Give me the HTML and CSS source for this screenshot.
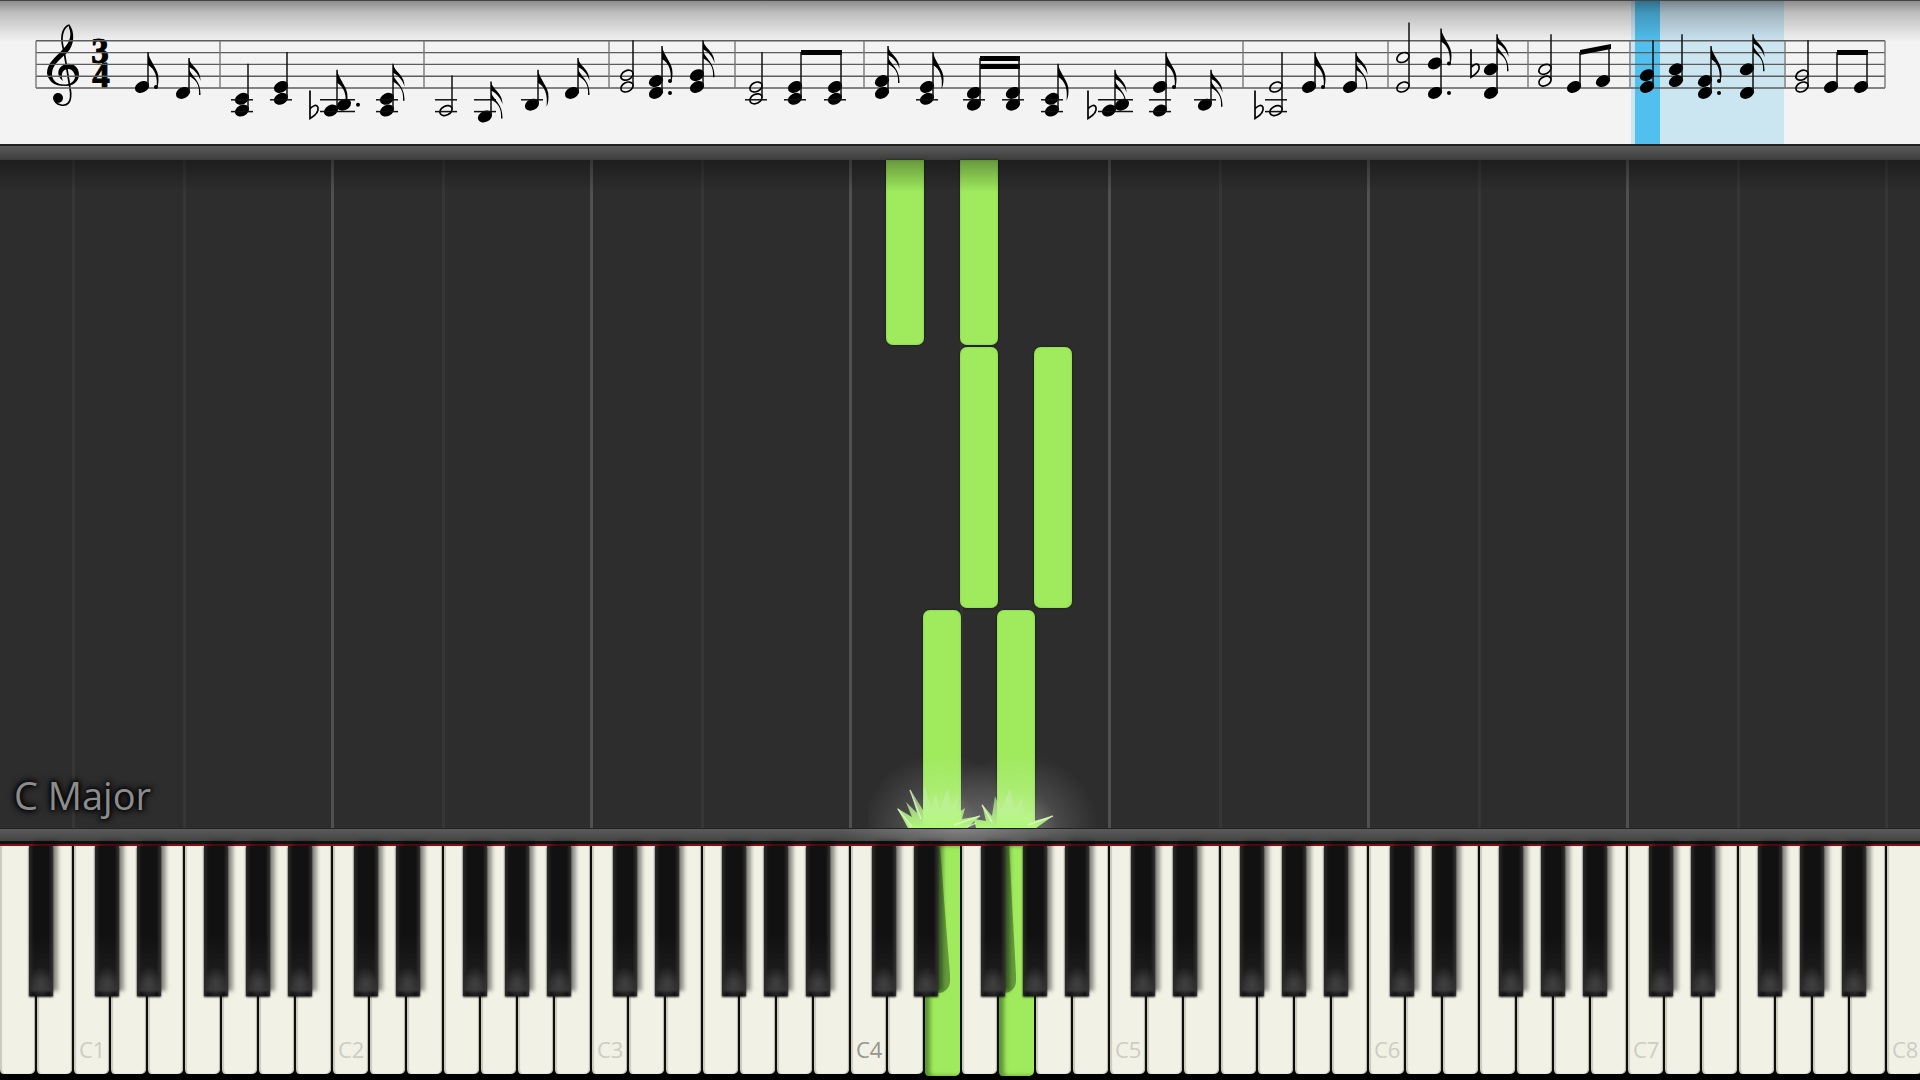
FILE: index.html
```html
<!DOCTYPE html>
<html lang="en">
  <head>
    <meta charset="UTF-8" />
    <meta name="viewport" content="width=device-width, initial-scale=1.0" />
    <title>Piano Player</title>
    <link rel="stylesheet" href="styles.css">
  </head>
  <body>
    <div class="player">
      <div class="score">
        <svg id="sheet" class="sheet" viewBox="0 0 1920 144" role="img" aria-label="Sheet music, 3/4 time">
          <defs>
            <linearGradient id="shade" x1="0" y1="0" x2="0" y2="1">
              <stop offset="0" stop-color="#000" stop-opacity="0.44" />
              <stop offset="0.3" stop-color="#000" stop-opacity="0.22" />
              <stop offset="1" stop-color="#000" stop-opacity="0" />
            </linearGradient>
            <g id="clef">
              <path d="M69 24 C75 31 75 45 67 53 C58 61 52 66 52 74 C52 81 58 85 66 85 C57 88 48 82 47 73 C47 63 56 57 63 49 C70 43 72 34 69 28 Z" />
              <path d="M58 84 C66 88 78 86 79 75 C79 66 72 63 67 64 C58 65 55 75 63 81 C60 74 63 69 68 69 C73 69 75 74 75 77 C74 83 68 86 58 84 Z" />
              <path class="thin" d="M69 25 C62 28 60 38 64 51 L70 88 C73 104 66 106 61 105 C56 104 54 101 55 98" />
              <circle cx="58" cy="98" r="5" />
            </g>
            <path id="flag8" d="M0 0 C1 9 11 17 10.500 27 C10.500 31 10 34 8.500 37 C10 25 7 17 0 13 Z" />
            <path id="flag16" d="M0 0 C1 8 12 11 11.500 23 C10 17 6 12 0 9 Z M0 10 C1 18 12 21 11.500 37 L10 37 C11 26 6 21 0 18 Z" />
            <path id="flat" class="thin" d="M0 -21 V7 C5 4 9 0 8 -4 C7 -8 3 -6 0 -3" />
            <ellipse id="head" rx="7.500" ry="5.500" transform="rotate(-28)" />
            <ellipse id="open" class="thin" rx="6.500" ry="4.500" transform="rotate(-28)" />
          </defs>
          <rect class="bar-now" x="1631" y="0" width="153" height="144" />
          <rect class="beat-now" x="1635" y="0" width="25" height="144" />
          <rect x="0" y="0" width="1920" height="42" fill="url(#shade)" />
          <rect x="0" y="0" width="1920" height="1" fill="#444" />
          <use href="#clef" />
          <text class="time" x="100" y="63">3</text>
          <text class="time" x="101" y="87">4</text>
        </svg>
      </div>

      <div class="rail"></div>

      <div class="roll">
        <div id="lanes" class="lanes"></div>
        <div class="key-name">C Major</div>
        <svg class="splash" viewBox="0 0 240 100" aria-hidden="true">
          <defs>
            <radialGradient id="glow">
              <stop offset="0" stop-color="#f0ffe0" stop-opacity="0.45" />
              <stop offset="0.5" stop-color="#fff" stop-opacity="0.13" />
              <stop offset="1" stop-color="#fff" stop-opacity="0" />
            </radialGradient>
            <linearGradient id="spark" x1="0" y1="0" x2="0" y2="1">
              <stop offset="0" stop-color="#c8eeb0" stop-opacity="0.5" />
              <stop offset="1" stop-color="#b0f878" />
            </linearGradient>
          </defs>
          <ellipse cx="74" cy="100" rx="80" ry="75" fill="url(#glow)" />
          <ellipse cx="150" cy="100" rx="80" ry="75" fill="url(#glow)" />
          <path fill="url(#spark)" d="M40 100 L29 80 L44 89 L38 74 L49 85 L42 61 L55 82 L56 56 L63 80 L68 66 L72 82 L80 60 L82 80 L90 70 L88 86 L97 80 L94 91 L112 88 L99 100 Z" />
          <path fill="url(#spark)" d="M108 100 L106 91 L118 93 L114 76 L124 88 L127 68 L133 82 L142 60 L146 82 L154 70 L155 86 L166 84 L162 94 L185 88 L168 100 Z" />
          <path class="ray" d="M86 97 L112 88 M99 99 L108 95 M160 97 L185 88 M30 81 L44 99 M42 62 L53 91 M114 77 L124 94" />
        </svg>
      </div>

      <div class="rail rail-bottom"></div>
      <div id="keyboard" class="keyboard"></div>
    </div>
    <script src="script.js"></script>
  </body>
</html>
```
FILE: styles.css
```css
body {
  margin: 0;
  background-color: #000;
  font-family: "Open Sans", "Noto Sans", sans-serif;
}
.player {
  display: flex;
  flex-direction: column;
  height: 100vh;
  overflow: hidden;
}

/* sheet music */
.score {
  background-color: #f3f3f3;
}
.sheet {
  display: block;
  width: 100%;
}
.bar-now {
  fill: #cbe5f1;
}
.beat-now {
  fill: #52c0ef;
}
.staff,
.barline {
  stroke: #5c5c5c;
  stroke-width: 1.4;
}
.barline {
  stroke: #777;
}
.stem,
.ledger {
  stroke: #111;
  stroke-width: 1.5;
}
.thin {
  fill: none;
  stroke: #000;
  stroke-width: 1.7;
}
.time {
  font-family: "Liberation Serif", serif;
  font-weight: bold;
  font-size: 35px;
  text-anchor: middle;
  stroke: #000;
  stroke-width: 1;
}

/* metal strips above and below the roll */
.rail {
  flex: none;
  height: 14px;
  border-top: 2px solid #222;
  background: linear-gradient(#5c5c5c, #3c3c3c);
}
.rail-bottom {
  height: 12px;
  border-top: 1px solid #222;
  border-bottom: 3px solid #111;
  background: radial-gradient(120px 40px at 50% 0, rgba(255, 255, 255, 0.25), transparent), linear-gradient(#5a5a5a, #444);
}

/* falling notes */
.roll {
  position: relative;
  flex: 1;
  min-height: 0;
  background-color: #2d2d2d;
}
.roll::after {
  content: "";
  position: absolute;
  inset: 0 0 auto;
  height: 32px;
  background: linear-gradient(rgba(0, 0, 0, 0.35), transparent);
}
.lanes,
.keyboard {
  display: grid;
  grid-template-columns: repeat(52, minmax(0, 1fr));
  margin-left: -2px;
  margin-right: -2px;
}
.lanes {
  grid-template-rows: 185fr 262fr 218fr;
  row-gap: 2px;
  height: 100%;
}
.lane {
  grid-row: 1 / -1;
}
.lane-f {
  border-left: 3px solid #363636;
}
.lane-c {
  border-left: 3px solid #505050;
}
.note {
  margin-right: -1px;
  border-radius: 7px;
  background-color: #9fea5d;
  box-shadow: inset 0 0 2px #7fc743, 0 0 2px #111;
}
.note-in {
  border-top-left-radius: 0;
  border-top-right-radius: 0;
}
.note-out {
  border-bottom-left-radius: 0;
  border-bottom-right-radius: 0;
}
.key-name {
  position: absolute;
  left: 14px;
  bottom: 7px;
  font-size: 38px;
  line-height: 52px;
  color: #8c8c8c;
  text-shadow: 0 0 4px #000, 0 0 6px #000, 0 0 8px #000;
}
.splash {
  position: absolute;
  left: 45.2%;
  bottom: 0;
  width: 12.5%;
}
.ray {
  fill: none;
  stroke: #e8ffd4;
  stroke-width: 1.5;
  stroke-opacity: 0.7;
}

/* keyboard */
.keyboard {
  flex: none;
  height: 228px;
  padding-bottom: 6px;
  border-top: 2px solid #7c1420;
  background-color: #000;
}
.key {
  position: relative;
  display: flex;
  align-items: flex-end;
  min-width: 0;
  padding: 0 0 10px 5px;
  border: 0;
  border-left: 2px solid #0c0c0a;
  border-radius: 0 0 5px 5px;
  background-color: #f1f1e5;
  box-shadow: inset 2px 0 1px #c9c9bd, inset -1px 0 1px #b5b5aa;
  font-family: inherit;
  font-size: 22px;
  line-height: 30px;
  color: #cdcdc3;
}
.key-middle {
  color: #96968e;
}
.key-down {
  margin-bottom: -2px;
  background-color: #9fea5d;
  box-shadow: inset 5px 0 4px #5c9435;
}
.sharp {
  position: absolute;
  z-index: 1;
  top: 0;
  width: 24px;
  height: 150px;
  background: linear-gradient(90deg, #2a2a28, transparent 20%, transparent 82%, #333), radial-gradient(12px 18px at 50% 92%, #404040, transparent), linear-gradient(#111 60%, #1c1c1c 85%, #303030 96%, #0a0a0a 98%);
  box-shadow: 5px -5px 4px rgba(0, 0, 0, 0.4), 0 1px 2px #111;
}
.sharp-c {
  left: 60%;
}
.sharp-d {
  left: 75%;
}
.sharp-f {
  left: 53%;
}
.sharp-g {
  left: 68%;
}
.sharp-a {
  left: 82%;
}
/* long shadow a sharp drops on a pressed key */
.key-down::before {
  content: "";
  position: absolute;
  top: 0;
  left: 0;
  width: 25px;
  height: 147px;
  border-radius: 0 0 12px 0;
  background-color: #659c3b;
  clip-path: polygon(0 0, 60% 0, 80% 45%, 100% 88%, 100% 100%, 0 100%);
}
/* G sits closer to the sharp on its left */
.key-down-g::before {
  width: 17px;
}
```
FILE: script.js
```js
const SVG = "http://www.w3.org/2000/svg";
const sheet = document.getElementById("sheet");
const lanes = document.getElementById("lanes");
const keyboard = document.getElementById("keyboard");

// x of the head, steps above E4, type ("q", "h", "8", "16" or "b" for beamed)
const notes = [
  [142, [0], "8", "dot"], [183, [-1], "16"],
  [242, [-2, -4], "q"], [281, [0, -2], "q"],
  [331, [-4, -3], "8", "dot"], [387, [-2, -4], "16"],
  [446, [-4], "h"], [485, [-5], "16"], [532, [-3], "8"], [572, [-1], "16"],
  [627, [2, 0], "h"], [656, [1, -1], "8", "dot"], [697, [2, 0], "16"],
  [756, [0, -2], "h"], [795, [0, -2], "b"], [835, [0, -2], "b"],
  [882, [1, -1], "16"], [927, [0, -2], "8"],
  [974, [-1, -3], "b"], [1013, [-1, -3], "b"], [1052, [-2, -4], "8"],
  [1109, [-4, -3], "16"], [1160, [0, -4], "8", "dot"], [1205, [-3], "16"],
  [1276, [0, -4], "h"], [1309, [0], "8", "dot"], [1350, [0], "16"],
  [1403, [5, 0], "h"], [1435, [4, -1], "8", "dot"], [1491, [3, -1], "16"],
  [1545, [3, 1], "h"], [1574, [0], "b"], [1603, [1], "b"],
  [1647, [2, 0], "q"], [1676, [3, 1], "q"],
  [1705, [1, -1], "8", "dot"], [1747, [3, -1], "16"],
  [1802, [2, 0], "h"], [1831, [0], "b"], [1861, [0], "b"],
];
const bars = [36, 220, 424, 609, 735, 864, 1243, 1388, 1528, 1630, 1785, 1885];
const flats = [[310, -4], [1088, -4], [1255, -4], [1471, 3]];
const beams = [
  [801, 50, 842, 50], [980, 56, 1020, 56], [980, 64, 1020, 64],
  [1580, 50, 1611, 44], [1837, 50, 1868, 50],
];

function draw(tag, attrs) {
  const el = document.createElementNS(SVG, tag);
  for (const name in attrs) {
    el.setAttribute(name, attrs[name]);
  }
  sheet.appendChild(el);
}

function line(cls, x1, y1, x2, y2) {
  draw("line", { class: cls, x1, y1, x2, y2 });
}

function stepY(step) {
  return 88 - step * 5.9;
}

for (let i = 0; i < 5; i++) {
  line("staff", 36, stepY(i * 2), 1885, stepY(i * 2));
}
bars.forEach((x) => line("barline", x, stepY(8), x, stepY(0)));
flats.forEach(([x, step]) => draw("use", { href: "#flat", x, y: stepY(step) }));
beams.forEach(([x1, y1, x2, y2]) =>
  draw("path", { d: `M${x1} ${y1} L${x2} ${y2} V${y2 + 5} L${x1} ${y1 + 5} Z` })
);

notes.forEach(([x, steps, type, dot]) => {
  const cluster = steps[1] - steps[0] === 1;
  const top = stepY(Math.max(...steps)) - 36;
  const low = Math.min(...steps);
  const stem = x + 6;

  steps.forEach((step, i) => {
    const headX = cluster && i === 1 ? x + 13 : x;
    draw("use", { href: type === "h" ? "#open" : "#head", x: headX, y: stepY(step) - 1 });
    if (dot && step > -4) {
      draw("circle", { cx: headX + 14, cy: stepY(step) - 1, r: 2 });
    }
  });
  for (let step = -2; step >= low; step -= 2) {
    line("ledger", x - 11, stepY(step), x + (cluster ? 24 : 11), stepY(step));
  }
  line("stem", stem, top, stem, stepY(low) - 2);
  if (type === "8" || type === "16") {
    draw("use", { href: "#flag" + type, x: stem, y: top });
  }
});

// 52 white keys, A0 to C8
const names = ["A", "B", "C", "D", "E", "F", "G"];
const pressed = [25, 27];

for (let i = 0; i < 52; i++) {
  const name = names[i % 7];
  const octave = Math.floor((i + 5) / 7);

  const lane = document.createElement("div");
  lane.className = "lane";
  if (name === "F" || i === 2 || i === 51) {
    lane.classList.add("lane-f");
  } else if (name === "C") {
    lane.classList.add("lane-c");
  }
  lane.style.gridColumn = i + 1;
  lanes.appendChild(lane);

  const key = document.createElement("button");
  key.type = "button";
  key.className = "key";
  key.setAttribute("aria-label", name + octave);
  if (name === "C") {
    key.textContent = name + octave;
  }
  if (i === 23) {
    key.classList.add("key-middle");
  }
  if (pressed.includes(i)) {
    key.classList.add("key-down", "key-down-" + name.toLowerCase());
  }
  if (name !== "B" && name !== "E" && i < 51) {
    const sharp = document.createElement("span");
    sharp.className = "sharp sharp-" + name.toLowerCase();
    key.appendChild(sharp);
  }
  // A0 has its sharp too, the lowest pair on the board
  keyboard.appendChild(key);
}

// white key index, row of the roll, extra class
[
  [24, 1, "note-in"], [26, 1, "note-in"],
  [26, 2], [28, 2],
  [25, 3, "note-out"], [27, 3, "note-out"],
].forEach(([key, row, extra]) => {
  const note = document.createElement("div");
  note.className = "note " + (extra || "");
  note.style.gridColumn = key + 1;
  note.style.gridRow = row;
  lanes.appendChild(note);
});
```
